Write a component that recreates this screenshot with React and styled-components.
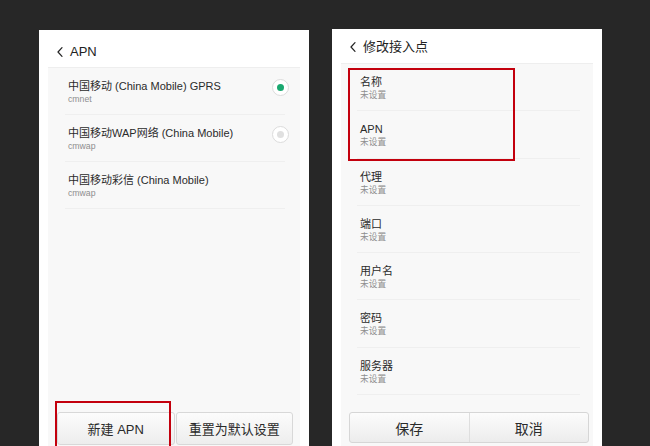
import React from "react";
import styled, { createGlobalStyle } from "styled-components";

const Global = createGlobalStyle`
  html, body {
    margin: 0;
    padding: 0;
    background: #272727;
  }
  body {
    font-family: "Liberation Sans", "Noto Sans CJK SC", sans-serif;
    -webkit-font-smoothing: antialiased;
  }
  * { box-sizing: border-box; }
`;

const Stage = styled.div`
  width: 650px;
  height: 446px;
  overflow: hidden;
  display: flex;
  align-items: flex-start;
  gap: 23px;
  padding-left: 39px;
  background: #272727;
`;

const Card = styled.div`
  position: relative;
  width: 270px;
  height: ${(p) => 446 - p.$top}px;
  margin-top: ${(p) => p.$top}px;
  background: #ffffff;
  padding: 0 9px;
  display: flex;
  flex-direction: column;
  overflow: hidden;
`;

const Header = styled.div`
  height: ${(p) => p.$h}px;
  padding-top: ${(p) => p.$pt}px;
  padding-left: 9px;
  display: flex;
  align-items: center;
  align-self: stretch;
  flex-shrink: 0;
`;

const HeaderLine = styled.div`
  height: 16px;
  display: flex;
  align-items: center;
  gap: 7px;
  font-size: 13px;
  line-height: 16px;
  color: #222;
`;

const Panel = styled.div`
  flex: 1;
  background: #f8f8f8;
  border-top: 1px solid #eeeeee;
  display: flex;
  flex-direction: column;
`;

const List = styled.div`
  display: flex;
  flex-direction: column;
`;

const Row = styled.div`
  height: ${(p) => p.$h}px;
  margin: 0 ${(p) => p.$mr}px 0 ${(p) => p.$ml}px;
  padding: 12px 0 0 3px;
  border-bottom: 1px solid #efefef;
  display: flex;
  align-items: flex-start;
  justify-content: space-between;
`;

const RowText = styled.div`
  display: flex;
  flex-direction: column;
`;

const Title = styled.div`
  font-size: 11px;
  line-height: 13px;
  color: #2b2b2b;
  white-space: nowrap;
`;

const Sub = styled.div`
  margin-top: 1px;
  font-size: 8.7px;
  line-height: 11px;
  color: #8e8e8e;
  white-space: nowrap;
`;

const Radio = styled.div`
  width: 17px;
  height: 17px;
  margin-top: -1px;
  margin-right: -4px;
  border-radius: 50%;
  border: 1px solid #dcdcdc;
  background: #fff;
  display: flex;
  align-items: center;
  justify-content: center;
  &::after {
    content: "";
    width: 7px;
    height: 7px;
    border-radius: 50%;
    background: ${(p) => (p.$on ? "#1aa870" : "#e0e0e0")};
  }
`;

const BottomBar = styled.div`
  margin-top: auto;
  display: flex;
  gap: ${(p) => p.$gap}px;
  padding: 0 ${(p) => p.$pr}px ${(p) => p.$pb}px ${(p) => p.$pl}px;
`;

const Button = styled.div`
  flex: 1;
  height: 33px;
  border: 1px solid #d8d8d8;
  border-radius: 3px;
  background: linear-gradient(#fcfcfc, #ededed);
  display: flex;
  align-items: center;
  justify-content: center;
  font-size: 13px;
  color: #2a2a2a;
`;

const Segmented = styled.div`
  flex: 1;
  height: 31px;
  border: 1px solid #d6d6d6;
  border-radius: 3px;
  background: linear-gradient(#fcfcfc, #ececec);
  display: flex;
`;

const Segment = styled.div`
  flex: 1;
  display: flex;
  align-items: center;
  justify-content: center;
  font-size: 14px;
  color: #2a2a2a;
  & + & {
    border-left: 1px solid #dedede;
  }
`;

const Highlight = styled.div`
  position: absolute;
  left: ${(p) => p.$x}px;
  top: ${(p) => p.$y}px;
  width: ${(p) => p.$w}px;
  height: ${(p) => p.$hh}px;
  border: 2px solid #c3000d;
  pointer-events: none;
`;

const Back = () => (
  <svg width="6" height="10" viewBox="0 0 6 10">
    <polyline
      points="5,0.7 1,5 5,9.3"
      fill="none"
      stroke="#222"
      strokeWidth="1.2"
      strokeLinecap="round"
      strokeLinejoin="round"
    />
  </svg>
);

const apns = [
  { name: "中国移动 (China Mobile) GPRS", sub: "cmnet", radio: "on" },
  { name: "中国移动WAP网络 (China Mobile)", sub: "cmwap", radio: "off" },
  { name: "中国移动彩信 (China Mobile)", sub: "cmwap", radio: null },
];

const fields = ["名称", "APN", "代理", "端口", "用户名", "密码", "服务器"];

export default function App() {
  return (
    <>
      <Global />
      <Stage>
        <Card $top={30}>
          <Header $h={37} $pt={6}>
            <HeaderLine>
              <Back />
              <span>APN</span>
            </HeaderLine>
          </Header>
          <Panel>
            <List>
              {apns.map((a) => (
                <Row key={a.name} $h={47} $ml={17} $mr={15}>
                  <RowText>
                    <Title>{a.name}</Title>
                    <Sub>{a.sub}</Sub>
                  </RowText>
                  {a.radio && <Radio $on={a.radio === "on"} />}
                </Row>
              ))}
            </List>
            <BottomBar $gap={1} $pl={9} $pr={7} $pb={1}>
              <Button>新建 APN</Button>
              <Button>重置为默认设置</Button>
            </BottomBar>
          </Panel>
          <Highlight $x={16} $y={371} $w={116} $hh={60} />
        </Card>

        <Card $top={29}>
          <Header $h={34} $pt={2}>
            <HeaderLine>
              <Back />
              <span>修改接入点</span>
            </HeaderLine>
          </Header>
          <Panel>
            <List>
              {fields.map((f) => (
                <Row key={f} $h={47.3} $ml={16} $mr={13}>
                  <RowText>
                    <Title>{f}</Title>
                    <Sub>未设置</Sub>
                  </RowText>
                </Row>
              ))}
            </List>
            <BottomBar $gap={0} $pl={8} $pr={4} $pb={3}>
              <Segmented>
                <Segment>保存</Segment>
                <Segment>取消</Segment>
              </Segmented>
            </BottomBar>
          </Panel>
          <Highlight $x={16} $y={39} $w={167} $hh={93} />
        </Card>
      </Stage>
    </>
  );
}
